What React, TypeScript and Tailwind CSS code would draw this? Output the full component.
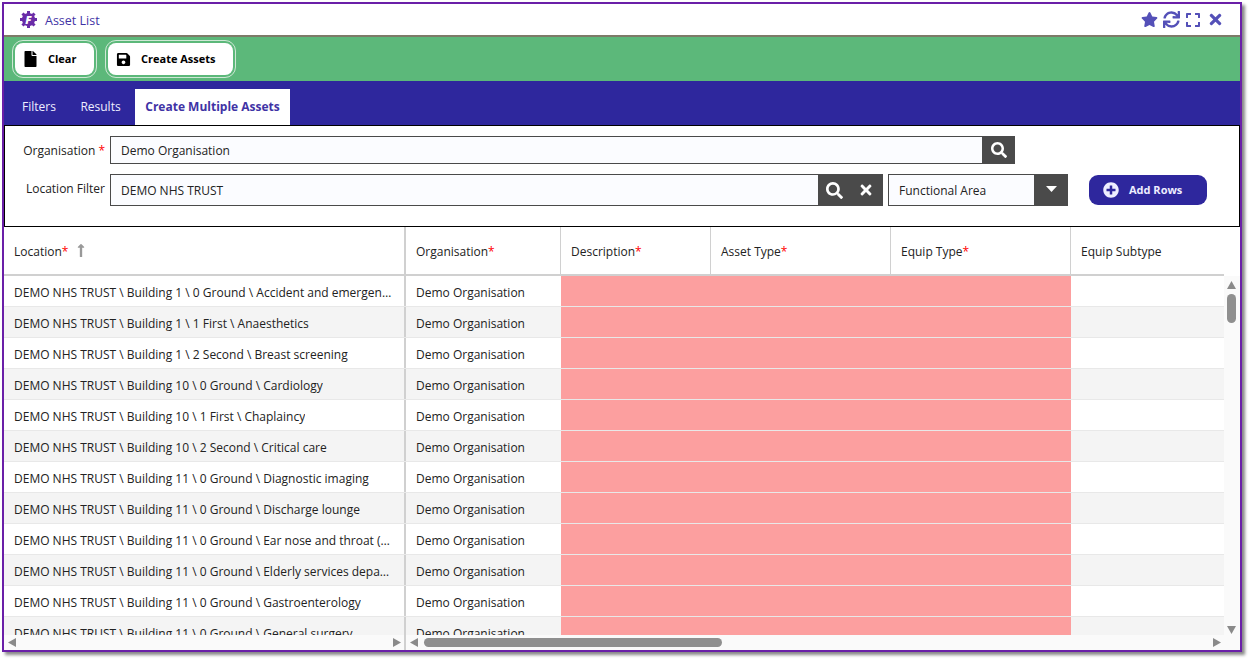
import { FaExpand, FaFile, FaLongArrowAltUp, FaPlusCircle, FaSave, FaSearch, FaStar, FaSync, FaTimes } from 'react-icons/fa'

const locations = [
  'DEMO NHS TRUST \\ Building 1 \\ 0 Ground \\ Accident and emergency department',
  'DEMO NHS TRUST \\ Building 1 \\ 1 First \\ Anaesthetics',
  'DEMO NHS TRUST \\ Building 1 \\ 2 Second \\ Breast screening',
  'DEMO NHS TRUST \\ Building 10 \\ 0 Ground \\ Cardiology',
  'DEMO NHS TRUST \\ Building 10 \\ 1 First \\ Chaplaincy',
  'DEMO NHS TRUST \\ Building 10 \\ 2 Second \\ Critical care',
  'DEMO NHS TRUST \\ Building 11 \\ 0 Ground \\ Diagnostic imaging',
  'DEMO NHS TRUST \\ Building 11 \\ 0 Ground \\ Discharge lounge',
  'DEMO NHS TRUST \\ Building 11 \\ 0 Ground \\ Ear nose and throat (ENT)',
  'DEMO NHS TRUST \\ Building 11 \\ 0 Ground \\ Elderly services department',
  'DEMO NHS TRUST \\ Building 11 \\ 0 Ground \\ Gastroenterology',
  'DEMO NHS TRUST \\ Building 11 \\ 0 Ground \\ General surgery',
]

const arrows = {
  up: '0,8 4.5,0 9,8',
  down: '0,0 9,0 4.5,8',
  left: '8,0 8,9 0,4.5',
  right: '0,0 8,4.5 0,9',
}

function Arrow({ dir }: { dir: keyof typeof arrows }) {
  const wide = dir === 'up' || dir === 'down'
  return (
    <svg width={wide ? 9 : 8} height={wide ? 8 : 9} viewBox={wide ? '0 0 9 8' : '0 0 8 9'} className="shrink-0 fill-[#8a8a8a]">
      <polygon points={arrows[dir]} />
    </svg>
  )
}

function Logo() {
  return (
    <div className="relative flex h-[17px] w-[17px] items-center justify-center">
      <svg viewBox="0 0 17 17" className="h-[17px] w-[17px] fill-[#6a2ca8]">
        <circle cx="8.5" cy="8.5" r="6.6" />
        {[0, 45, 90, 135, 180, 225, 270, 315].map((deg) => (
          <rect key={deg} x="7" y="0" width="3" height="3" transform={`rotate(${deg} 8.5 8.5)`} />
        ))}
      </svg>
      <span className="absolute text-[11px] font-extrabold italic leading-none text-white">F</span>
    </div>
  )
}

function HeaderCell({ label, required, className }: { label: string; required?: boolean; className: string }) {
  return (
    <div className={`flex items-center px-[10px] border-r border-[#d0d0d0] text-[12px] text-[#222] ${className}`}>
      <span className="pt-[3px]">
        {label}
        {required && <span className="text-[#f00]">*</span>}
      </span>
    </div>
  )
}

function ActionButton({ icon, label, className }: { icon: React.ReactNode; label: string; className: string }) {
  return (
    <div className="rounded-[11px] border border-[#cfe8d6] p-[2px]">
      <button className={`flex h-[32px] items-center rounded-[8px] bg-white text-[11px] font-bold text-black ${className}`}>
        {icon}
        {label}
      </button>
    </div>
  )
}

export default function App() {
  return (
    <div className="h-[660px] w-[1249px] overflow-hidden bg-white p-[2px] font-['Open_Sans',sans-serif]">
      <div className="flex h-[650px] w-[1240px] flex-col border-[2px] border-[#6a1fa8] bg-white shadow-[3px_3px_3px_#888]">
        {/* title bar */}
        <div className="flex h-[31px] shrink-0 items-center justify-between pl-[16px] pr-[17px]">
          <div className="flex items-center gap-[8px]">
            <Logo />
            <span className="pt-[3px] text-[12.5px] text-[#3f33a5]">Asset List</span>
          </div>
          <div className="flex items-center gap-[5px] text-[#5450b8]">
            <FaStar className="h-[17px] w-[17px]" />
            <FaSync className="h-[17px] w-[17px]" />
            <FaExpand className="h-[16px] w-[16px]" />
            <FaTimes className="ml-[2px] h-[17px] w-[15px]" />
          </div>
        </div>
        <div className="h-[2px] shrink-0 bg-[#7d7a68]" />

        {/* toolbar */}
        <div className="flex h-[44px] shrink-0 items-center gap-[8px] bg-[#5cb87a] pl-[8px]">
          <ActionButton icon={<FaFile className="mr-[11px] h-[16px] w-[13px]" />} label="Clear" className="w-[79px] pl-[9px]" />
          <ActionButton icon={<FaSave className="mr-[10px] h-[15px] w-[15px]" />} label="Create Assets" className="w-[125px] pl-[8px]" />
        </div>

        {/* tabs */}
        <div className="flex h-[44px] shrink-0 items-end bg-[#2e279d] text-[12px]">
          <div className="flex h-[36px] w-[65px] items-center justify-center pl-[5px] text-[#eef]">Filters</div>
          <div className="flex h-[36px] w-[64px] items-center justify-center pr-[1px] text-[#eef]">Results</div>
          <div className="ml-[2px] flex h-[36px] w-[155px] items-center justify-center bg-white font-bold text-[#3f33a5]">Create Multiple Assets</div>
        </div>

        {/* filters */}
        <div className="flex h-[102px] shrink-0 flex-col border border-black bg-white pt-[10px] text-[12px] text-[#222]">
          <div className="flex h-[28px] items-center">
            <div className="w-[105px] pr-[5px] pt-[2px] text-right">
              Organisation <span className="text-[#f00]">*</span>
            </div>
            <div className="flex h-[28px] w-[873px] items-center border border-[#4a4a4a] bg-[#fbfcff] pl-[10px]">
              <span className="pt-[2px]">Demo Organisation</span>
            </div>
            <div className="flex h-[28px] w-[32px] items-center justify-center bg-[#4a4a4a] pr-[1px] text-white">
              <FaSearch className="h-[16px] w-[16px]" />
            </div>
          </div>
          <div className="mt-[10px] flex h-[32px] items-start">
            <div className="mt-[6px] w-[105px] pr-[5px] text-right">Location Filter</div>
            <div className="flex h-[32px] w-[709px] items-center border border-[#4a4a4a] bg-[#fbfcff] pl-[10px]">
              <span className="pt-[2px]">DEMO NHS TRUST</span>
            </div>
            <div className="flex h-[32px] w-[64px] items-center justify-center gap-[16px] bg-[#4a4a4a] pr-[3px] text-white">
              <FaSearch className="h-[17px] w-[17px]" />
              <FaTimes className="h-[16px] w-[14px]" />
            </div>
            <div className="ml-[5px] flex h-[32px] w-[147px] items-center border border-[#4a4a4a] bg-[#fbfcff] pl-[10px]">
              <span className="pt-[2px]">Functional Area</span>
            </div>
            <div className="flex h-[32px] w-[33px] items-center justify-center bg-[#4a4a4a]">
              <svg width="11" height="6" viewBox="0 0 11 6" className="mb-[3px] fill-white">
                <polygon points="0,0 11,0 5.5,6" />
              </svg>
            </div>
            <button className="ml-[21px] mt-[1px] flex h-[30px] w-[118px] items-center rounded-[9px] bg-[#2e279d] pl-[14px] text-[11px] font-bold text-[#eef]">
              <FaPlusCircle className="mr-[10px] h-[16px] w-[16px]" />
              <span className="pt-[1px]">Add Rows</span>
            </button>
          </div>
        </div>

        {/* grid */}
        <div className="flex min-h-0 flex-1">
          <div className="flex min-w-0 flex-1 flex-col">
            <div className="flex h-[47px] shrink-0">
              <div className="flex w-[402px] items-center border-r-[2px] border-[#d0d0d0] px-[10px] text-[12px] text-[#222]">
                <span className="pt-[3px]">
                  Location<span className="text-[#f00]">*</span>
                </span>
                <FaLongArrowAltUp className="ml-[8px] h-[15px] w-[10px] text-[#999]" />
              </div>
              <HeaderCell label="Organisation" required className="w-[155px]" />
              <HeaderCell label="Description" required className="w-[150px]" />
              <HeaderCell label="Asset Type" required className="w-[180px]" />
              <HeaderCell label="Equip Type" required className="w-[180px]" />
              <HeaderCell label="Equip Subtype" className="flex-1 border-r-0" />
            </div>
            <div className="h-[2px] shrink-0 bg-[#d0d0d0]" />
            <div className="min-h-0 flex-1 overflow-hidden">
              {locations.map((location, i) => (
                <div key={location} className={`flex h-[31px] border-b border-[#e8e8e8] text-[12px] text-[#222] ${i % 2 ? 'bg-[#f4f4f4]' : 'bg-white'}`}>
                  <div className="flex w-[402px] shrink-0 items-center border-r-[2px] border-[#d0d0d0] px-[10px]">
                    <span className="truncate pt-[3px]">{location}</span>
                  </div>
                  <div className="flex w-[155px] shrink-0 items-center px-[10px] pt-[3px]">Demo Organisation</div>
                  <div className="w-[510px] shrink-0 bg-[#fc9f9f]" />
                </div>
              ))}
            </div>
          </div>
          {/* vertical scrollbar */}
          <div className="mt-[49px] flex w-[16px] shrink-0 flex-col items-center bg-[#fafafa] pr-[1px] pt-[5px]">
            <Arrow dir="up" />
            <div className="mt-[5px] h-[29px] w-[9px] rounded-full bg-[#8f8f8f]" />
            <div className="flex-1" />
            <div className="pb-[1px]">
              <Arrow dir="down" />
            </div>
          </div>
        </div>

        {/* horizontal scrollbars */}
        <div className="flex h-[15px] shrink-0 bg-[#fafafa]">
          <div className="flex w-[402px] items-center justify-between border-r-[2px] border-[#d0d0d0] pl-[4px] pr-[3px]">
            <Arrow dir="left" />
            <Arrow dir="right" />
          </div>
          <div className="flex flex-1 items-center pl-[4px] pr-[19px]">
            <Arrow dir="left" />
            <div className="ml-[6px] h-[9px] w-[298px] rounded-full bg-[#8f8f8f]" />
            <div className="flex-1" />
            <Arrow dir="right" />
          </div>
        </div>
      </div>
    </div>
  )
}
